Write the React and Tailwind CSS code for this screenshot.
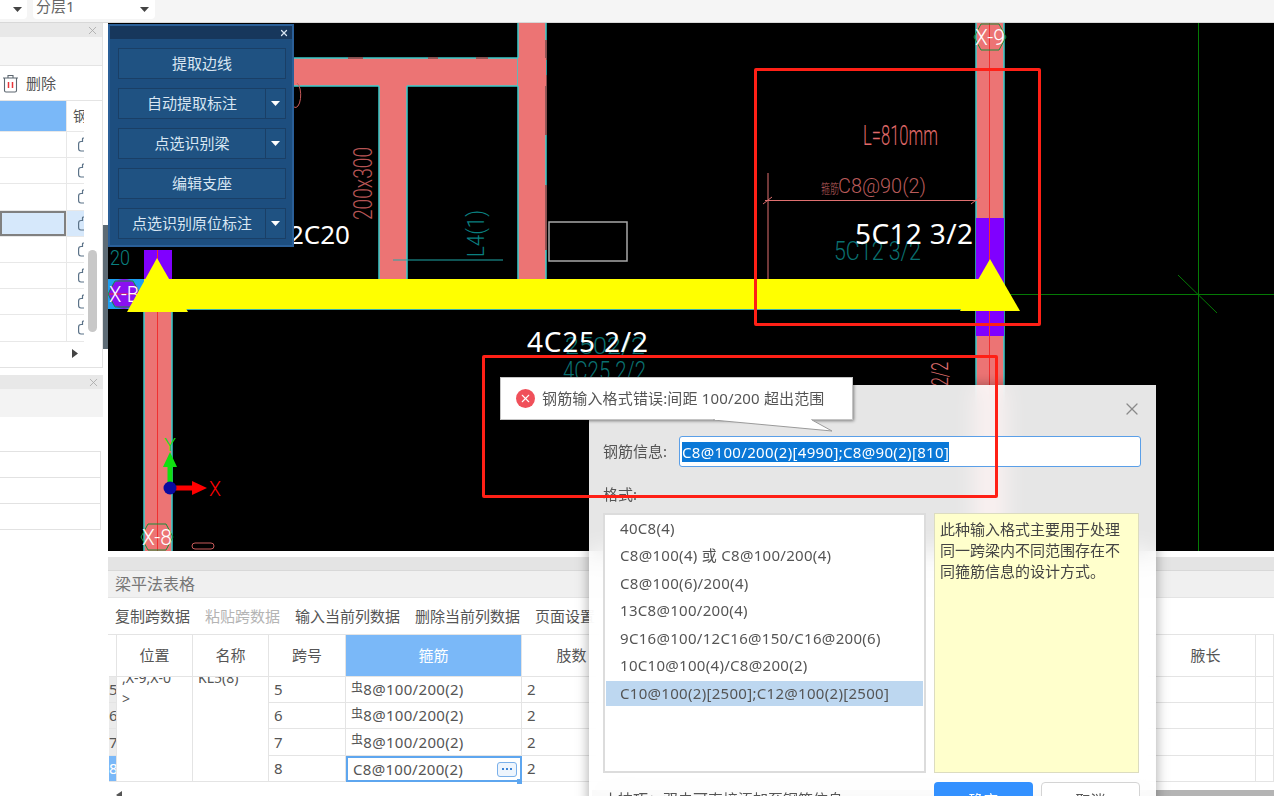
import { X } from 'lucide-react'

const FONT = "font-['Noto_Sans','Noto_Sans_CJK_SC',sans-serif]"

const formats = [
  '40C8(4)',
  'C8@100(4) 或 C8@100/200(4)',
  'C8@100(6)/200(4)',
  '13C8@100/200(4)',
  '9C16@100/12C16@150/C16@200(6)',
  '10C10@100(4)/C8@200(2)',
  'C10@100(2)[2500];C12@100(2)[2500]',
]

const buttons = [
  { label: '提取边线' },
  { label: '自动提取标注', menu: true },
  { label: '点选识别梁', menu: true },
  { label: '编辑支座' },
  { label: '点选识别原位标注', menu: true },
]

const tableCols = 'grid-cols-[8px_76px_76px_77px_176px_100px_534px_100px_18px]'

function Caret({ className = '' }) {
  return (
    <svg width="9" height="5" viewBox="0 0 9 5" className={className}>
      <path d="M0 0h9L4.500 5z" fill="currentColor" />
    </svg>
  )
}

function CadText({ x, y, w, size, fill, rotate, children }) {
  return (
    <text
      x={x}
      y={y}
      fontSize={size}
      fill={fill}
      textLength={w}
      lengthAdjust="spacingAndGlyphs"
      transform={rotate ? `rotate(${rotate} ${x} ${y})` : undefined}
      className="font-['Roboto','Noto_Sans_CJK_SC',sans-serif] font-light"
    >
      {children}
    </text>
  )
}

function Bubble({ cx, cy, label }) {
  const pts = [[-9, -13], [9, -13], [16, 0], [9, 13], [-9, 13], [-16, 0]]
    .map(([a, b]) => `${cx + a},${cy + b}`)
    .join(' ')
  return (
    <g>
      <polygon points={pts} fill="none" stroke="#15903a" strokeWidth="1" />
      <CadText x={cx - 15} y={cy + 8} w={30} size={22} fill="#fff">{label}</CadText>
    </g>
  )
}

function Column({ x, y1, y2 }) {
  return (
    <g>
      <rect x={x} y={y1} width="28" height={y2 - y1} fill="#ec7474" />
      <path d={`M${x} ${y1}V${y2}M${x + 28} ${y1}V${y2}`} stroke="#38cccc" strokeWidth="1.500" />
    </g>
  )
}

// the CAD drawing, in page coordinates
function CadCanvas() {
  return (
    <svg width="1166" height="528" viewBox="108 23 1166 528" className="block bg-black">
      <path d="M1198.500 23V551M1010 294.500H1274M1178 275L1217 313" stroke="#057a05" strokeWidth="1" fill="none" />

      <rect x="280" y="58" width="238" height="28" fill="#ec7474" />
      <path d="M280 58H518M280 86H379M407 86H518" stroke="#38cccc" strokeWidth="1.500" />
      <path d="M348 58H363M428 58H438M476 58H488" stroke="#a33838" strokeWidth="1.500" />
      <Column x={379} y1={86} y2={279} />
      <Column x={518} y1={23} y2={279} />
      <path d="M546 40V60M546 75V135M546 185V250" stroke="#a33838" strokeWidth="1.500" fill="none" />
      <rect x="518" y="58" width="28" height="28" fill="#ec7474" />
      <path d="M294 107a5 12 0 0 0 3 -24" stroke="#c85a5a" fill="none" />

      <rect x="549" y="222" width="78" height="39" fill="none" stroke="#a8a8a8" strokeWidth="1.500" />
      <path d="M393 260H503" stroke="#1fa8a8" />
      <CadText x={372} y={220} w={73} size={25} fill="#b65454" rotate={-90}>200x300</CadText>
      <CadText x={484} y={257} w={47} size={23} fill="#0a7f7f" rotate={-90}>L4(1)</CadText>
      <text x="350" y="244" fontSize="26" fill="#fff" textAnchor="end" className="font-['Noto_Sans',sans-serif]">2C20</text>

      {/* left column */}
      <Column x={144} y1={309} y2={551} />
      <rect x="144" y="250" width="28" height="29" fill="#8000ff" />
      <rect x="108" y="279" width="36" height="30" fill="#1e9ef0" />
      <circle cx="124" cy="294" r="15" fill="#8a10f0" />
      <path d="M157.500 250V551" stroke="#f03030" strokeWidth="1" />
      <path d="M108 294H140" stroke="#f03030" />
      <Bubble cx={124} cy={294} label="X-B" />
      <CadText x={110} y={265} w={20} size={20} fill="#0a8080">20</CadText>
      <Bubble cx={157} cy={537} label="X-8" />
      <rect x="192" y="543" width="22" height="6" rx="3" fill="none" stroke="#c85a5a" strokeWidth="1" />

      {/* right column */}
      <Column x={976} y1={23} y2={551} />
      <rect x="976" y="218" width="28" height="118" fill="#8000ff" />
      <path d="M989.500 23V551" stroke="#f03030" strokeWidth="1" />
      <Bubble cx={990} cy={37} label="X-9" />

      {/* yellow beam */}
      <rect x="144" y="279" width="846" height="30" fill="#ffff00" />
      <path d="M144 309.500H976" stroke="#3fb0a8" strokeWidth="1" />
      <path d="M157 258L188 312H127z" fill="#ffff00" />
      <path d="M990 259L1020 311H960z" fill="#ffff00" />

      {/* dimension */}
      <path d="M768 173V279M765 200.500H977M763 204L772 197M971 204L980 197" stroke="#e07070" strokeWidth="1" fill="none" />
      <CadText x={863} y={145} w={75} size={28} fill="#e06a6a">L=810mm</CadText>
      <CadText x={821} y={193} w={18} size={13} fill="#c06060">箍筋</CadText>
      <CadText x={838} y={193} w={88} size={21} fill="#b85a5a">C8@90(2)</CadText>
      <CadText x={834} y={260} w={87} size={25} fill="#0a7070">5C12 3/2</CadText>
      <text x="855" y="244" fontSize="28" fill="#fff" textLength="118" className="font-['Noto_Sans',sans-serif]">5C12 3/2</text>

      <CadText x={563} y={380} w={83} size={25} fill="#0a7070">4C25 2/2</CadText>
      <CadText x={565} y={354} w={80} size={24} fill="#0a7070">2502/2</CadText>
      <text x="527" y="352" fontSize="28" fill="#fff" textLength="121" className="font-['Noto_Sans',sans-serif]">4C25 2/2</text>
      <CadText x={948} y={386} w={24} size={24} fill="#e07070" rotate={-90}>2/2</CadText>

      {/* UCS icon */}
      <path d="M170 488V465" stroke="#10e010" strokeWidth="5" />
      <path d="M170 452L177 467H163z" fill="#10e010" />
      <CadText x={164} y={451} w={12} size={18} fill="#10e010">Y</CadText>
      <path d="M176 488H194" stroke="#ff0000" strokeWidth="5" />
      <path d="M207 488L192 481V495z" fill="#ff0000" />
      <CadText x={209} y={496} w={12} size={20} fill="#ff0000">X</CadText>
      <circle cx="170" cy="488" r="6.500" fill="#0a0aa0" />
    </svg>
  )
}

function LockGlyph() {
  return (
    <svg width="7" height="15" viewBox="0 0 7 15" className="ml-[11px] shrink-0">
      <path d="M7 1H5.500a1 1 0 0 0-1 1v2.500H3a2.500 2.500 0 0 0-2.400 2.500v4.500A2.500 2.500 0 0 0 3 14h4" fill="none" stroke="#5b7288" strokeWidth="1.200" />
    </svg>
  )
}

function Sidebar() {
  const rows = [0, 1, 2, 3, 4, 5, 6, 7]
  return (
    <div className="w-[108px] h-full flex bg-white">
      <div className="w-[103px] h-full flex flex-col text-[#555]">
        <div className="h-[345px] flex flex-col border-r border-b border-[#e2e2e2]">
          <div className="h-[14px] bg-[#e8e8e8] flex justify-end items-center pr-[3px] text-[#a8a8a8]">
            <X size={13} strokeWidth={1.500} />
          </div>
          <div className="h-[29px] bg-[#f6f6f6] border-b border-[#e4e4e4]" />
          <div className="h-[35px] flex items-center gap-[7px] pl-[2px] border-b border-[#e4e4e4] text-[15px]">
            <svg width="17" height="19" viewBox="0 0 17 19" fill="none">
              <path d="M1 4h15M6 4V1.500h5V4M2.500 4v12.500a1.500 1.500 0 0 0 1.500 1.500h9a1.500 1.500 0 0 0 1.500-1.500V4" stroke="#5d6770" strokeWidth="1.100" />
              <path d="M6.500 8v6M10.500 8v6" stroke="#e8353a" strokeWidth="1.500" />
            </svg>
            <span>删除</span>
          </div>
          <div className="flex flex-1">
            <div className="w-[84px] flex flex-col">
              <div className="h-[31px] flex border-b border-[#e8e8e8]">
                <div className="w-[66px] bg-[#7ab8f8]" />
                <div className="flex-1 overflow-hidden pl-[6px] pt-[4px] text-[14px] whitespace-nowrap border-l border-[#e8e8e8]">钢筋</div>
              </div>
              {rows.map(r => (
                <div key={r} className={`h-[26.200px] flex border-b border-[#e8e8e8] ${r === 3 ? 'bg-[#d6e8fb]' : ''}`}>
                  <div className={`w-[66px] ${r === 3 ? 'border-2 border-[#808080]' : ''}`} />
                  <div className="flex-1 flex items-center overflow-hidden border-l border-[#e8e8e8]">
                    <LockGlyph />
                  </div>
                </div>
              ))}
              <div className="flex-1 flex justify-end items-center pb-[2px] pr-[6px]">
                <svg width="6" height="9" viewBox="0 0 6 9"><path d="M0 0l6 4.500L0 9z" fill="#444" /></svg>
              </div>
            </div>
            <div className="flex-1 pl-[4px] pt-[149px]">
              <div className="w-[9px] h-[82px] rounded-full bg-[#c8c8c8]" />
            </div>
          </div>
        </div>
        <div className="h-[7px] bg-white" />
        <div className="h-[14px] bg-[#e8e8e8] flex justify-end items-center pr-[3px] text-[#a8a8a8]">
          <X size={13} strokeWidth={1.500} />
        </div>
        <div className="h-[28px] bg-[#f3f3f3]" />
        <div className="h-[34px]" />
        <div className="w-[101px] border-t border-[#e2e2e2]">
          {[0, 1, 2].map(i => (
            <div key={i} className="h-[26px] border-b border-r border-[#e2e2e2]" />
          ))}
        </div>
      </div>
      <div className="flex-1 pt-[202px]">
        <div className="h-[124px] bg-[#5d6b75]" />
      </div>
    </div>
  )
}

function Cell({ children, className = '' }) {
  return <div className={`border-r border-b border-[#e4e4e4] flex items-center overflow-hidden whitespace-nowrap ${className}`}>{children}</div>
}

function BeamTable() {
  const spans = [5, 6, 7, 8]
  return (
    <div className="flex-1 flex flex-col bg-white text-[#555]">
      <div className="h-[14px] bg-[#e4e4e4] border-b border-[#d8d8d8]" />
      <div className="h-[27px] bg-[#f0f0f0] flex items-center pl-[7px] text-[16px] text-[#777] border-b border-[#e4e4e4]">梁平法表格</div>
      <div className="h-[37px] flex items-center gap-[15px] pl-[7px] text-[15px] border-b border-[#e4e4e4]">
        <span>复制跨数据</span>
        <span className="text-[#b4b4b4]">粘贴跨数据</span>
        <span>输入当前列数据</span>
        <span>删除当前列数据</span>
        <span>页面设置</span>
      </div>
      <div className={`grid ${tableCols} grid-rows-[42px_26px_26px_27px_26px] pl-px text-[15px]`}>
        <Cell />
        <Cell className="justify-center">位置</Cell>
        <Cell className="justify-center">名称</Cell>
        <Cell className="justify-center">跨号</Cell>
        <Cell className="justify-center bg-[#7ab8f8] text-white">箍筋</Cell>
        <Cell className="justify-center">肢数</Cell>
        <Cell />
        <Cell className="justify-center border-r">腋长</Cell>
        <Cell />

        {spans.map((s, i) => (
          <div key={s} className="contents">
            <Cell className={s === 8 ? 'bg-[#7ab8f8] text-white' : 'bg-[#ebebeb]'}>{s}</Cell>
            {i === 0 && (
              <div className="row-span-4 border-r border-b border-[#e4e4e4] overflow-hidden px-[5px] text-[14px] leading-[21px]">
                <div className="-mt-[10px]">,X-9,X-0</div>
                <div>&gt;</div>
              </div>
            )}
            {i === 0 && (
              <div className="row-span-4 border-r border-b border-[#e4e4e4] overflow-hidden px-[5px] text-[14px] leading-[21px]">
                <div className="-mt-[10px]">KL5(8)</div>
              </div>
            )}
            <Cell className="pl-[5px]">{s}</Cell>
            {s === 8 ? (
              <div className="border-2 border-[#5ea6ef] flex items-center justify-between pl-[5px] pr-[3px] relative tracking-[0.3px]">
                <span>C8@100/200(2)</span>
                <span className="w-[20px] h-[15px] border border-[#7ab0ea] rounded-[3px] bg-[#eef5fd] flex items-center justify-center gap-[2px]">
                  <i className="w-[2px] h-[2px] bg-[#3d84d6]" />
                  <i className="w-[2px] h-[2px] bg-[#3d84d6]" />
                  <i className="w-[2px] h-[2px] bg-[#3d84d6]" />
                </span>
                <span className="absolute -right-[2px] -bottom-[4px] w-[5px] h-[5px] bg-[#5ea6ef]" />
              </div>
            ) : (
              <Cell className="pl-[5px] tracking-[0.3px]">
                <span className="text-[12px] -mt-[4px]">虫</span>8@100/200(2)
              </Cell>
            )}
            <Cell className="pl-[5px]">2</Cell>
            <Cell />
            <Cell />
            <Cell />
          </div>
        ))}
      </div>
      <div className="flex-1 flex items-end pl-[8px]">
        <svg width="6" height="8" viewBox="0 0 6 8" className="-mb-[3px]"><path d="M6 0L0 4l6 4z" fill="#555" /></svg>
        <div className="flex-1 h-[6px] ml-[470px] bg-[#b4b4b4]" />
      </div>
    </div>
  )
}

function FloatingPanel() {
  return (
    <div className="absolute left-[108px] top-[24px] w-[186px] h-[223px] bg-[#1d4e7f] border-2 border-[#2a5f98] flex flex-col">
      <div className="h-[13px] bg-[#17375c] flex justify-end items-center pr-[3px] text-[#d4e2f0]">
        <X size={10} strokeWidth={3} />
      </div>
      <div className="flex flex-col gap-[9px] pl-[8px] pr-[6px] pt-[9px]">
        {buttons.map(b => (
          <div key={b.label} className="h-[31px] flex border border-[#1a3f66] bg-[#1f5282] text-[15px] text-[#d8e6f2]">
            <div className="flex-1 flex items-center justify-center">{b.label}</div>
            {b.menu && (
              <div className="w-[20px] flex items-center justify-center border-l border-[#1a3f66] text-white">
                <Caret />
              </div>
            )}
          </div>
        ))}
      </div>
    </div>
  )
}

function RebarDialog() {
  return (
    <div className="absolute left-[589px] top-[385px] w-[567px] h-[430px] bg-white/90 backdrop-blur-md shadow-[0_0_12px_rgba(0,0,0,0.35)] pl-[14px] pr-[15px] text-[#555]">
      <div className="h-[51px] flex justify-end items-center pb-[3px] -mr-px text-[#8a8a8a]">
        <X size={20} strokeWidth={1.500} />
      </div>
      <div className="flex items-center h-[31px] text-[15px]">
        <span className="w-[76px]">钢筋信息:</span>
        <div className="flex-1 h-[31px] bg-white border border-[#5a9fe8] rounded-[3px] flex items-center pl-[2px]">
          <span className="bg-[#0a78d7] text-white leading-[20px] whitespace-nowrap tracking-[0.33px]">C8@100/200(2)[4990];C8@90(2)[810]</span>
        </div>
      </div>
      <div className="h-[46px] flex items-end pb-[8px] text-[15px]">格式:</div>
      <div className="flex gap-[8px] h-[260px]">
        <div className="w-[323px] bg-white border-2 border-[#dcdcdc] px-[1px] pt-[0.500px] text-[15px] tracking-[0.3px]">
          {formats.map((f, i) => (
            <div key={f} className={`h-[25px] mb-[2.500px] flex items-center pl-[14px] whitespace-nowrap ${i === 6 ? 'bg-[#bdd7f0]' : ''}`}>{f}</div>
          ))}
        </div>
        <div className="w-[205px] bg-[#ffffcc] border border-[#dcdcc0] pl-[5px] pr-[16px] pt-[5px] text-[15px] leading-[21px] text-[#444]">
          此种输入格式主要用于处理同一跨梁内不同范围存在不同箍筋信息的设计方式。
        </div>
      </div>
      <div className="flex pt-[9px] text-[15px]">
        <span className="w-[331px] pt-[6px]">小技巧：双击可直接添加至钢筋信息</span>
        <div className="w-[99px] h-[36px] rounded-[4px] bg-[#3391ff] text-white flex items-center justify-center">确定</div>
        <div className="w-[99px] h-[36px] ml-[8px] rounded-[4px] bg-white border border-[#d4d4d4] flex items-center justify-center">取消</div>
      </div>
    </div>
  )
}

function ErrorTip() {
  return (
    <div className="absolute left-[500px] top-[377px] w-[353px] h-[43px] bg-white border border-[#c4c4c4] shadow-[1px_1px_3px_rgba(0,0,0,0.45)] flex items-center pl-[15px] gap-[7px] text-[15px] text-[#555]">
      <span className="w-[19px] h-[19px] rounded-full bg-[#f0505a] flex items-center justify-center text-white">
        <X size={13} strokeWidth={2} />
      </span>
      <span className="whitespace-nowrap tracking-[0.15px]">钢筋输入格式错误:间距 100/200 超出范围</span>
      <svg width="122" height="14" viewBox="0 0 122 14" className="absolute left-[212px] top-[41px]">
        <path d="M0 1L119 12L99 1" fill="#fff" stroke="#9a9a9a" strokeWidth="1" />
        <path d="M2 0H98" stroke="#fff" strokeWidth="2" />
      </svg>
    </div>
  )
}

export default function App() {
  return (
    <div className={`relative w-[1274px] h-[796px] overflow-hidden bg-white flex flex-col ${FONT}`}>
      <div className="h-[23px] shrink-0 bg-[#f5f5f5] flex gap-[6px] border-b border-[#d8d8d8] text-[15px] text-[#666]">
        <div className="w-[27px] h-[19px] bg-white rounded-br-[4px] flex justify-end items-center pr-[5px] text-[#444]"><Caret /></div>
        <div className="w-[122px] h-[19px] bg-white rounded-b-[4px] flex justify-between items-center pl-[3px] pr-[6px] text-[#444]">
          <span className="text-[#666] leading-none -mt-[6px]">分层1</span>
          <Caret />
        </div>
      </div>
      <div className="flex-1 flex min-h-0">
        <Sidebar />
        <div className="flex-1 flex flex-col min-w-0">
          <CadCanvas />
          <div className="h-[6px] bg-white" />
          <BeamTable />
        </div>
      </div>
      <FloatingPanel />
      <RebarDialog />
      <ErrorTip />
      {/* red review marks drawn over the screen */}
      <div className="absolute left-[754px] top-[68px] w-[287px] h-[258px] border-[3px] border-[#ff2016] rounded-[2px]" />
      <div className="absolute left-[482px] top-[355px] w-[516px] h-[143px] border-[3px] border-[#ff2016] rounded-[2px]" />
    </div>
  )
}
